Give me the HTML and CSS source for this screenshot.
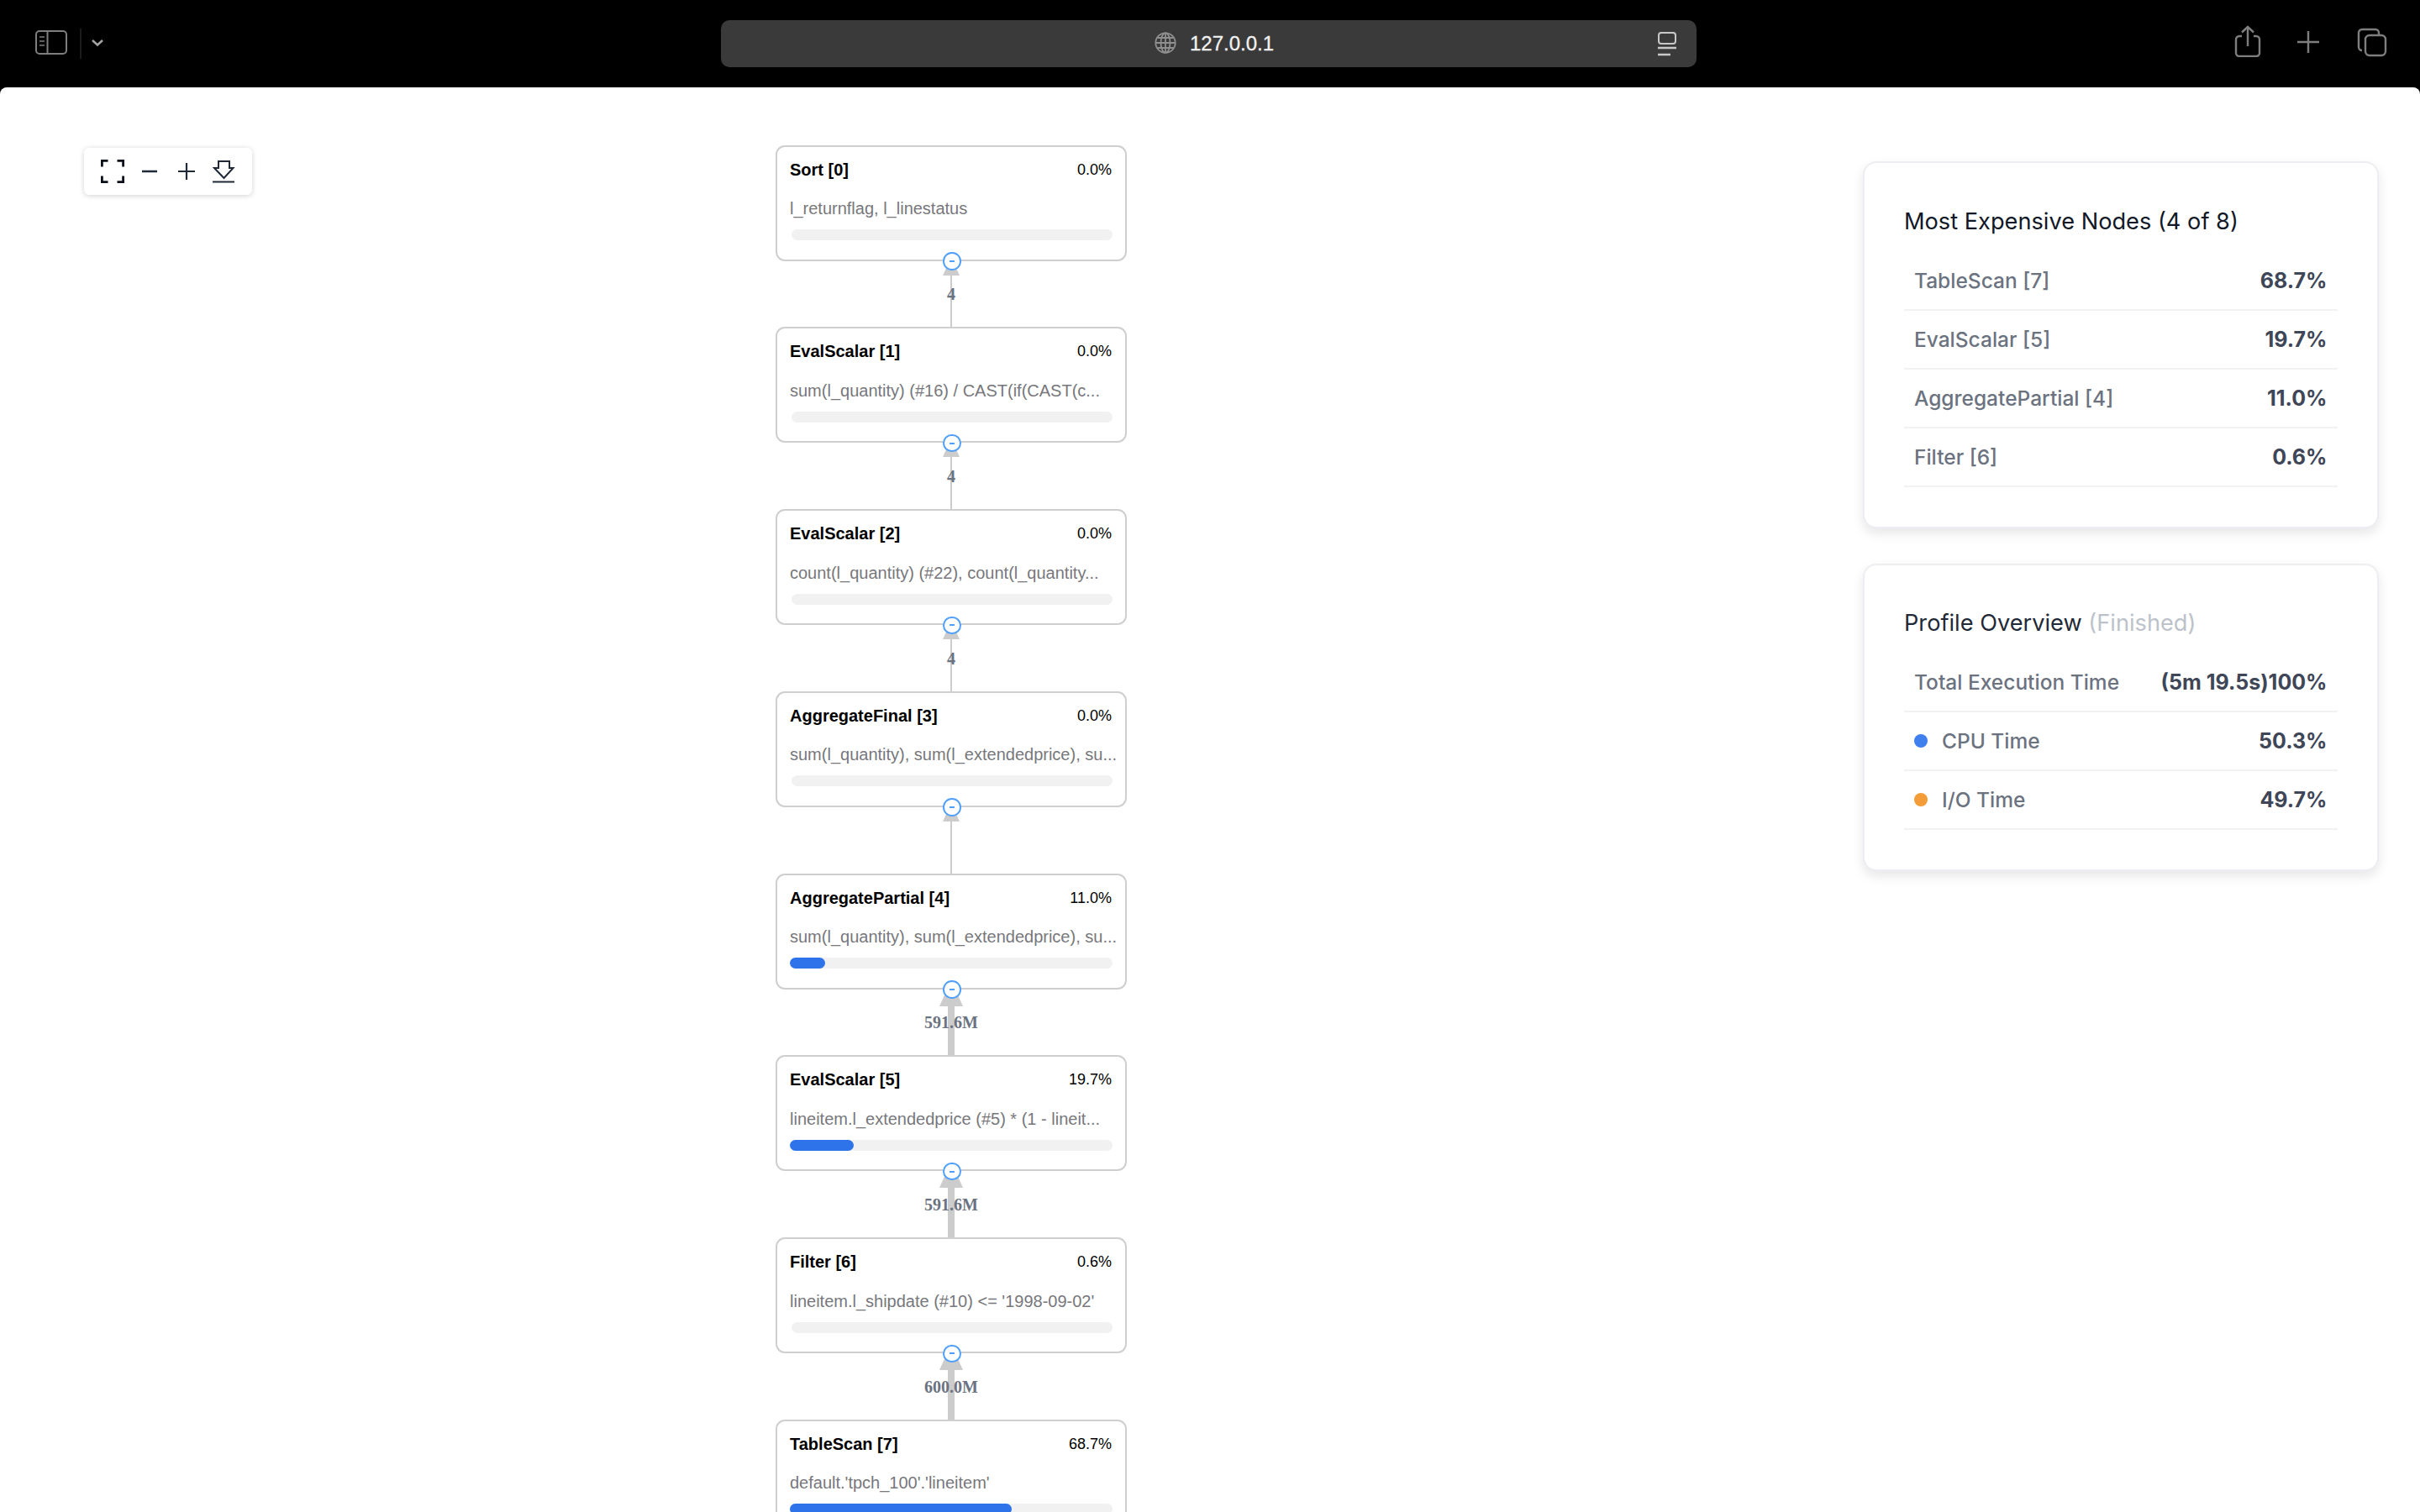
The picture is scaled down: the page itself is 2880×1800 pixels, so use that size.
FILE: index.html
```html
<!DOCTYPE html>
<html lang="en">
<head>
<meta charset="utf-8">
<title>127.0.0.1</title>
<link rel="stylesheet" href="styles.css">
</head>
<body>
<header class="browser-bar">
  <div class="bar-left">
    <svg class="ico-sidebar" width="40" height="31" viewBox="0 0 40 31" fill="none" stroke="#7e7e7e" stroke-width="2"><rect x="2" y="2" width="36" height="27" rx="4"/><path d="M15.500 2V29"/><path d="M6 9h6M6 14h6M6 19h6" stroke-width="1.600"/></svg>
    <span class="bar-divider"></span>
    <svg class="ico-chevron" width="16" height="10" viewBox="0 0 16 10" fill="none" stroke="#a3a3a3" stroke-width="2.600"><path d="M2 2l6 5.500L14 2"/></svg>
  </div>
  <div class="address">
    <svg class="ico-globe" width="26" height="26" viewBox="0 0 26 26" fill="none" stroke="#8f8f8f" stroke-width="1.800"><circle cx="13" cy="13" r="11.700"/><ellipse cx="13" cy="13" rx="5.500" ry="11.700"/><path d="M13 1.300V24.700M1.300 13H24.700M3.500 7h19M3.500 19h19"/></svg>
    <span class="host">127.0.0.1</span>
    <svg class="ico-reader" width="24" height="30" viewBox="0 0 24 30" fill="none" stroke="#c8c8c8" stroke-width="2"><rect x="2" y="2" width="20" height="13" rx="3"/><path d="M1 20h22M1 28h15" stroke-width="2.400"/></svg>
  </div>
  <div class="bar-right">
    <svg class="ico-share" width="32" height="38" viewBox="0 0 32 38" fill="none" stroke="#7e7e7e" stroke-width="2.400"><path d="M9 13H6a4 4 0 0 0-4 4v16a4 4 0 0 0 4 4h20a4 4 0 0 0 4-4V17a4 4 0 0 0-4-4h-3"/><path d="M16 25V2M9 8.500L16 2l7 6.500"/></svg>
    <svg class="ico-plus" width="28" height="28" viewBox="0 0 28 28" fill="none" stroke="#7e7e7e" stroke-width="2.400"><path d="M14 1V27M1 14H27"/></svg>
    <svg class="ico-tabs" width="36" height="35" viewBox="0 0 36 35" fill="none" stroke="#7e7e7e" stroke-width="2.400"><path d="M6 27a4 4 0 0 1-4-4V6a4 4 0 0 1 4-4h16a4 4 0 0 1 4 4v3"/><rect x="10" y="9" width="24" height="24" rx="5"/></svg>
  </div>
</header>

<main class="page">
  <div class="toolbar">
    <svg width="32" height="32" viewBox="0 0 32 32" fill="none" stroke="#0b0f19" stroke-width="2.800"><path d="M10.500 3.400H3.400V10.500M21.500 3.400H28.600V10.500M10.500 28.600H3.400V21.500M21.500 28.600H28.600V21.500"/></svg>
    <svg width="32" height="32" viewBox="0 0 32 32" fill="none" stroke="#1f2937" stroke-width="2.600"><path d="M7 16H25"/></svg>
    <svg width="32" height="32" viewBox="0 0 32 32" fill="none" stroke="#1f2937" stroke-width="2.200"><path d="M6 16H26M16 6V26"/></svg>
    <svg width="32" height="32" viewBox="0 0 32 32" fill="none" stroke="#1f2937" stroke-width="2"><path d="M10 4H23V12H27.500L16.500 24 5 12H10Z"/><path d="M3 28.500H29" stroke-width="2"/></svg>
  </div>

  <section class="graph">
    <article class="node">
      <div class="node-head"><h3 class="node-title">Sort [0]</h3><span class="node-pct">0.0%</span></div>
      <p class="node-desc">l_returnflag, l_linestatus</p>
      <div class="track"><div class="fill" style="width:0%"></div></div>
    </article>
    <div class="edge edge-thin">
      <span class="edge-line"></span><span class="edge-arrow"></span><span class="edge-toggle"></span>
      <span class="edge-label">4</span>
    </div>
    <article class="node">
      <div class="node-head"><h3 class="node-title">EvalScalar [1]</h3><span class="node-pct">0.0%</span></div>
      <p class="node-desc">sum(l_quantity) (#16) / CAST(if(CAST(c...</p>
      <div class="track"><div class="fill" style="width:0%"></div></div>
    </article>
    <div class="edge edge-thin">
      <span class="edge-line"></span><span class="edge-arrow"></span><span class="edge-toggle"></span>
      <span class="edge-label">4</span>
    </div>
    <article class="node">
      <div class="node-head"><h3 class="node-title">EvalScalar [2]</h3><span class="node-pct">0.0%</span></div>
      <p class="node-desc">count(l_quantity) (#22), count(l_quantity...</p>
      <div class="track"><div class="fill" style="width:0%"></div></div>
    </article>
    <div class="edge edge-thin">
      <span class="edge-line"></span><span class="edge-arrow"></span><span class="edge-toggle"></span>
      <span class="edge-label">4</span>
    </div>
    <article class="node">
      <div class="node-head"><h3 class="node-title">AggregateFinal [3]</h3><span class="node-pct">0.0%</span></div>
      <p class="node-desc">sum(l_quantity), sum(l_extendedprice), su...</p>
      <div class="track"><div class="fill" style="width:0%"></div></div>
    </article>
    <div class="edge edge-thin">
      <span class="edge-line"></span><span class="edge-arrow"></span><span class="edge-toggle"></span>
    </div>
    <article class="node">
      <div class="node-head"><h3 class="node-title">AggregatePartial [4]</h3><span class="node-pct">11.0%</span></div>
      <p class="node-desc">sum(l_quantity), sum(l_extendedprice), su...</p>
      <div class="track"><div class="fill" style="width:11%"></div></div>
    </article>
    <div class="edge edge-thick">
      <span class="edge-line"></span><span class="edge-arrow"></span><span class="edge-toggle"></span>
      <span class="edge-label">591.6M</span>
    </div>
    <article class="node">
      <div class="node-head"><h3 class="node-title">EvalScalar [5]</h3><span class="node-pct">19.7%</span></div>
      <p class="node-desc">lineitem.l_extendedprice (#5) * (1 - lineit...</p>
      <div class="track"><div class="fill" style="width:19.7%"></div></div>
    </article>
    <div class="edge edge-thick">
      <span class="edge-line"></span><span class="edge-arrow"></span><span class="edge-toggle"></span>
      <span class="edge-label">591.6M</span>
    </div>
    <article class="node">
      <div class="node-head"><h3 class="node-title">Filter [6]</h3><span class="node-pct">0.6%</span></div>
      <p class="node-desc">lineitem.l_shipdate (#10) &lt;= '1998-09-02'</p>
      <div class="track"><div class="fill" style="width:0%"></div></div>
    </article>
    <div class="edge edge-thick">
      <span class="edge-line"></span><span class="edge-arrow"></span><span class="edge-toggle"></span>
      <span class="edge-label">600.0M</span>
    </div>
    <article class="node">
      <div class="node-head"><h3 class="node-title">TableScan [7]</h3><span class="node-pct">68.7%</span></div>
      <p class="node-desc">default.'tpch_100'.'lineitem'</p>
      <div class="track"><div class="fill" style="width:68.7%"></div></div>
    </article>
  </section>

  <aside class="side">
    <section class="card">
      <h2 class="card-title">Most Expensive Nodes (4 of 8)</h2>
      <ul class="rows">
        <li class="row"><span class="row-name">TableScan [7]</span><span class="row-val">68.7%</span></li>
        <li class="row"><span class="row-name">EvalScalar [5]</span><span class="row-val">19.7%</span></li>
        <li class="row"><span class="row-name">AggregatePartial [4]</span><span class="row-val">11.0%</span></li>
        <li class="row"><span class="row-name">Filter [6]</span><span class="row-val">0.6%</span></li>
      </ul>
    </section>
    <section class="card">
      <h2 class="card-title card-title-dark">Profile Overview <span class="muted">(Finished)</span></h2>
      <ul class="rows">
        <li class="row"><span class="row-name">Total Execution Time</span><span class="row-val">(5m 19.5s)100%</span></li>
        <li class="row"><span class="row-name"><i class="dot dot-blue"></i>CPU Time</span><span class="row-val">50.3%</span></li>
        <li class="row"><span class="row-name"><i class="dot dot-orange"></i>I/O Time</span><span class="row-val">49.7%</span></li>
      </ul>
    </section>
  </aside>
</main>
</body>
</html>
```
FILE: styles.css
```css
* { box-sizing: border-box; }
html, body { margin: 0; padding: 0; }
body {
  width: 2880px;
  height: 1800px;
  overflow: hidden;
  background: #000;
  font-family: "Liberation Sans", Arial, sans-serif;
}

/* browser chrome */
.browser-bar {
  height: 104px;
  background: #000;
  display: grid;
  grid-template-columns: 858px 1161px 1fr;
  align-items: start;
}
.bar-left {
  display: flex;
  align-items: flex-start;
  padding: 34px 0 0 41px;
}
.ico-sidebar { margin-top: 1px; }
.bar-divider {
  width: 2px;
  height: 36px;
  background: #1c1c1c;
  margin: 0 11px 0 14px;
}
.ico-chevron { display: block; margin-top: 12px; }
.address {
  margin-top: 24px;
  height: 56px;
  background: #3a3a3a;
  border-radius: 10px;
  display: flex;
  align-items: center;
  padding-left: 516px;
}
.ico-globe { margin-bottom: 3px; }
.host {
  margin-left: 16px;
  color: #f2f2f2;
  font-size: 24px;
  font-weight: 400;
  -webkit-text-stroke: 0.3px #f2f2f2;
}
.ico-reader { margin-left: auto; margin-right: 23px; }
.bar-right {
  display: flex;
  align-items: flex-start;
  padding: 30px 0 0 640px;
}
.ico-plus { margin: 6px 0 0 42px; }
.ico-tabs { margin: 3px 0 0 44px; }

/* page */
.page {
  height: 1696px;
  background: #fff;
  border-radius: 8px 8px 0 0;
  display: flex;
  align-items: flex-start;
  overflow: hidden;
}

/* toolbar */
.toolbar {
  margin: 72px 0 0 100px;
  width: 200px;
  height: 56px;
  flex: none;
  display: flex;
  align-items: center;
  padding-left: 18px;
  gap: 12px;
  background: #fff;
  border-radius: 6px;
  box-shadow: 0 1px 6px rgba(0, 0, 0, 0.18);
}
.toolbar svg { display: block; flex: none; }

/* graph */
.graph {
  margin: 68.700px 0 0 623px;
  width: 418px;
  flex: none;
  display: flex;
  flex-direction: column;
}
.node {
  height: 138px;
  flex: none;
  border: 2px solid #cfcfcf;
  border-radius: 11px;
  padding: 15px 15px 0;
  background: #fff;
}
.node-head {
  display: flex;
  justify-content: space-between;
  align-items: center;
  height: 24px;
}
.node-title {
  margin: 0;
  font-size: 20px;
  line-height: 24px;
  font-weight: 700;
  color: #000;
}
.node-pct {
  font-size: 18px;
  line-height: 24px;
  color: #000;
  padding-right: 1px;
}
.node-desc {
  margin: 22.500px 0 13px;
  font-size: 20px;
  line-height: 24px;
  color: #77777c;
  white-space: nowrap;
}
.track {
  height: 13px;
  position: relative;
}
.track::before {
  content: "";
  position: absolute;
  top: 0;
  right: 0;
  bottom: 0;
  left: 2px;
  background: #f1f1f1;
  border-radius: 7px;
}
.fill {
  position: relative;
  height: 100%;
  background: #2f73ea;
  border-radius: 7px;
}

/* edges */
.edge {
  height: 78.760px;
  flex: none;
  position: relative;
  z-index: 1;
}
.edge-line {
  position: absolute;
  top: 0;
  bottom: 0;
  background: #cccccc;
}
.edge-arrow {
  position: absolute;
  width: 0;
  height: 0;
  border-style: solid;
  border-color: transparent transparent #cccccc;
  border-top-width: 0;
}
.edge-toggle {
  position: absolute;
  left: 199px;
  top: -10.500px;
  width: 21.500px;
  height: 21.500px;
  border: 2px solid #4f9ffb;
  border-radius: 50%;
  background: #fff;
}
.edge-toggle::after {
  content: "";
  position: absolute;
  left: 5.750px;
  top: 7.750px;
  width: 6px;
  height: 2px;
  background: #4f9ffb;
}
.edge-label {
  position: absolute;
  left: 109px;
  width: 200px;
  top: 27.500px;
  text-align: center;
  font-family: "Liberation Serif", "Times New Roman", serif;
  font-weight: 700;
  font-size: 20px;
  line-height: 24px;
  color: #6b7280;
}
.edge-thin .edge-line { left: 208px; width: 2px; }
.edge-thin .edge-arrow {
  left: 199px;
  top: -5px;
  border-left-width: 10px;
  border-right-width: 10px;
  border-bottom-width: 22px;
}
.edge-thick .edge-line { left: 205.200px; width: 7.600px; }
.edge-thick .edge-arrow {
  left: 195px;
  top: -11px;
  border-left-width: 14px;
  border-right-width: 14px;
  border-bottom-width: 31px;
}

/* side cards */
.side {
  margin: 88.200px 49px 0 auto;
  width: 614.500px;
  flex: none;
  display: flex;
  flex-direction: column;
  gap: 42px;
}
.card {
  background: #fff;
  border: 2px solid #eceef1;
  border-radius: 16px;
  box-shadow: 0 6px 14px rgba(0, 0, 0, 0.1);
  padding: 49.500px 47.500px 47px;
}
.card-title {
  margin: 0 0 16px;
  font-family: Inter, "Liberation Sans", sans-serif;
  font-weight: 400;
  font-size: 27.200px;
  line-height: 40px;
  color: #111827;
}
.card-title-dark { color: #1f2937; }
.muted { color: #bcc2ca; }
.rows { margin: 0; padding: 0; list-style: none; }
.row {
  height: 70px;
  display: flex;
  justify-content: space-between;
  align-items: center;
  padding: 0 12px;
  border-bottom: 2px solid #f0f2f3;
  font-family: Inter, "Liberation Sans", sans-serif;
}
.row-name {
  color: #6b7280;
  font-size: 24.500px;
  font-weight: 500;
  display: flex;
  align-items: center;
}
.row-val { color: #3e4657; font-size: 25px; font-weight: 700; }
.dot {
  width: 16px;
  height: 16px;
  border-radius: 50%;
  margin-right: 17px;
}
.dot-blue { background: #3f7fee; }
.dot-orange { background: #f39c38; }
```
